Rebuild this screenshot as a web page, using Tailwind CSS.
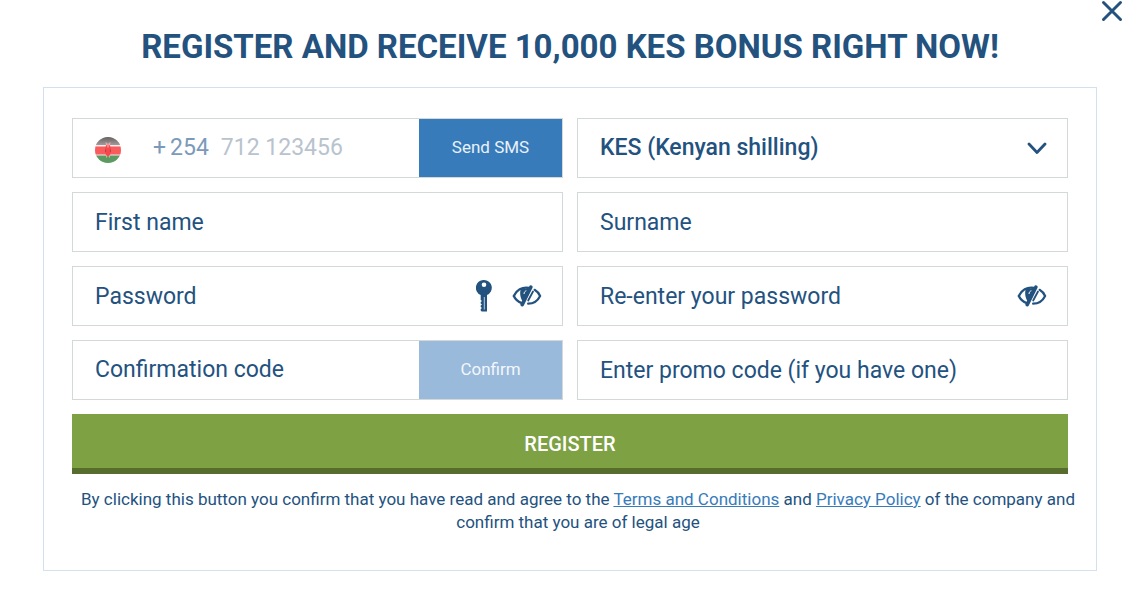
<!DOCTYPE html>
<html lang="en" class="bg-white">
<head>
  <meta charset="utf-8">
  <meta name="viewport" content="width=device-width, initial-scale=1">
  <title>Register</title>
  <script src="https://cdn.jsdelivr.net/npm/@tailwindcss/browser@4"></script>
</head>
<body class="font-[Roboto,sans-serif] text-[#23527f]">
  <header class="relative pt-6">
    <h1 class="text-center text-[33px] leading-[46px] font-bold">REGISTER AND RECEIVE 10,000 KES BONUS RIGHT NOW!</h1>
    <button type="button" aria-label="Close" class="absolute top-0 right-[17px]">
      <svg class="block w-[22px] h-[22px]" viewBox="0 0 22 22" fill="none" stroke="currentColor" stroke-width="3" stroke-linecap="round"><path d="M2.500 2.500l17 17M19.500 2.500l-17 17"/></svg>
    </button>
  </header>

  <main class="mx-[43px] mt-[17px] border border-[#d3e1ee] px-7 pt-[30px] pb-9">
    <form id="registerForm">
      <div class="grid grid-cols-2 gap-x-3.5 gap-y-3.5">
        <div class="flex h-[60px] border border-[#d3d9d9]">
          <div class="flex flex-1 min-w-0 items-center pl-[22px] text-[23px]">
            <svg class="w-[26px] h-[26px] mt-1 shrink-0" viewBox="0 0 26 26" role="img" aria-label="Kenya">
              <defs>
                <clipPath id="round"><circle cx="13" cy="13" r="13"/></clipPath>
                <linearGradient id="dark" x1="0" y1="0" x2="0" y2="1"><stop offset="0" stop-color="#666061"/><stop offset="1" stop-color="#a19b9b"/></linearGradient>
              </defs>
              <g clip-path="url(#round)">
                <path fill="#f5e9e9" d="M0 0h26v26H0z"/>
                <path fill="url(#dark)" d="M0 0h26v8H0z"/>
                <path fill="#fb5b5d" d="M0 9.500h26v8H0z"/>
                <path fill="#5b9a60" d="M0 18.500h26V26H0z"/>
                <path stroke="#f9b5b5" stroke-width="1" d="M11 5.500l3.500 15M15 5.500l-3.500 15"/>
                <ellipse cx="13" cy="13.300" rx="3" ry="6" fill="#f8484c"/>
                <path stroke="#fbc5c5" stroke-width="1" d="M13 6.500v4"/>
                <path stroke="#a8484c" stroke-width="1" d="M10.500 12.500v2.500M15.500 12.500v2.500"/>
              </g>
            </svg>
            <label for="phone" class="flex gap-1 ml-8 text-[#7b9aba]"><span>+</span><span>254</span></label>
            <input id="phone" type="tel" placeholder="712 123456" class="flex-1 min-w-0 ml-3 outline-none placeholder:text-[#b9c3ce]">
          </div>
          <button type="button" class="w-[143px] bg-[#377bba] text-[17px] text-[#e9f1f8]">Send SMS</button>
        </div>

        <div class="relative h-[60px] border border-[#d3d9d9]">
          <select aria-label="Currency" class="appearance-none w-full h-full px-[22px] text-[23px] font-medium outline-none">
            <option>KES (Kenyan shilling)</option>
          </select>
          <svg class="absolute inset-y-0 right-5 my-auto w-5 h-3 pointer-events-none" viewBox="0 -2 20 12" fill="none" stroke="currentColor" stroke-width="2.800" stroke-linecap="round" stroke-linejoin="round"><path d="M2 0l8 8.500L18 0"/></svg>
        </div>

        <input type="text" aria-label="First name" placeholder="First name" class="w-full h-[60px] border border-[#d3d9d9] px-[22px] text-[23px] outline-none placeholder:text-[#23527f]">
        <input type="text" aria-label="Surname" placeholder="Surname" class="w-full h-[60px] border border-[#d3d9d9] px-[22px] text-[23px] outline-none placeholder:text-[#23527f]">

        <div class="flex items-center h-[60px] border border-[#d3d9d9] pl-[22px] pr-5">
          <input type="password" aria-label="Password" placeholder="Password" class="flex-1 min-w-0 h-full text-[23px] outline-none placeholder:text-[#23527f]">
          <button type="button" aria-label="Generate password">
            <svg class="block w-4 h-8" viewBox="0 0 16 32">
              <path fill="currentColor" fill-rule="evenodd" d="M8 0a7.800 7.800 0 0 1 3 15V31.500H5.600L4.700 30.500v-1.500l1.300-1-1.300-1v-1.500l1.300-1-1.300-1v-1.500l1.300-1-1.300-1v-5A7.800 7.800 0 0 1 8 0zM8 2.500a2.300 2.300 0 1 0 0 4.600 2.300 2.300 0 0 0 0-4.600z"/>
              <path stroke="#fff" stroke-width=".7" d="M8.300 17v12.500"/>
            </svg>
          </button>
          <button type="button" aria-label="Show password" class="ml-5">
            <svg class="block w-[30px] h-[22px]" viewBox="0 0 30 22" fill="none" stroke="currentColor">
              <path stroke-width="2.400" d="M17 3C10 1.600 4.500 5.500 1.800 11c1.700 3.500 4.600 6 8 7.200"/>
              <path fill="currentColor" stroke="none" d="M9 3.500h8.500L11.300 17C8.300 14 7.300 8 9 3.500z"/>
              <path stroke="#fff" stroke-width="1" d="M12 9c.1-1.800 1-3 2.400-3.200"/>
              <path stroke-width="3.600" stroke-linecap="round" d="M18.800 2.200L10.200 19.600"/>
              <path stroke-width="2.200" stroke-linecap="round" d="M22.600 4.800c2.400 1.400 4.400 3.600 5.500 6.200-2.300 4.700-6.500 7.700-12 7.700"/>
              <path stroke-width="1.800" stroke-linecap="round" d="M21 6.500l-4.800 9"/>
            </svg>
          </button>
        </div>

        <div class="flex items-center h-[60px] border border-[#d3d9d9] pl-[22px] pr-5">
          <input type="password" aria-label="Re-enter your password" placeholder="Re-enter your password" class="flex-1 min-w-0 h-full text-[23px] outline-none placeholder:text-[#23527f]">
          <button type="button" aria-label="Show password">
            <svg class="block w-[30px] h-[22px]" viewBox="0 0 30 22" fill="none" stroke="currentColor">
              <path stroke-width="2.400" d="M17 3C10 1.600 4.500 5.500 1.800 11c1.700 3.500 4.600 6 8 7.200"/>
              <path fill="currentColor" stroke="none" d="M9 3.500h8.500L11.300 17C8.300 14 7.300 8 9 3.500z"/>
              <path stroke="#fff" stroke-width="1" d="M12 9c.1-1.800 1-3 2.400-3.200"/>
              <path stroke-width="3.600" stroke-linecap="round" d="M18.800 2.200L10.200 19.600"/>
              <path stroke-width="2.200" stroke-linecap="round" d="M22.600 4.800c2.400 1.400 4.400 3.600 5.500 6.200-2.300 4.700-6.500 7.700-12 7.700"/>
              <path stroke-width="1.800" stroke-linecap="round" d="M21 6.500l-4.800 9"/>
            </svg>
          </button>
        </div>

        <div class="flex h-[60px] border border-[#d3d9d9]">
          <input type="text" aria-label="Confirmation code" placeholder="Confirmation code" class="flex-1 min-w-0 px-[22px] text-[23px] outline-none placeholder:text-[#23527f]">
          <button type="button" class="w-[143px] bg-[#9abadb] text-[17px] text-[#f3f7fb]">Confirm</button>
        </div>
        <input type="text" aria-label="Promo code" placeholder="Enter promo code (if you have one)" class="w-full h-[60px] border border-[#d3d9d9] px-[22px] text-[23px] outline-none placeholder:text-[#23527f]">

        <button type="submit" class="col-span-2 h-[60px] border-b-6 border-[#566d2d] bg-[#7ea144] pt-1.5 text-xl font-medium text-white">REGISTER</button>
      </div>
      <p class="-mr-4 mt-3.5 text-center text-[17px] leading-[23px]">By clicking this button you confirm that you have read and agree to the <a href="#" class="text-[#377bba] underline">Terms and Conditions</a> and <a href="#" class="text-[#377bba] underline">Privacy Policy</a> of the company and confirm that you are of legal age</p>
    </form>
  </main>
</body>
</html>
